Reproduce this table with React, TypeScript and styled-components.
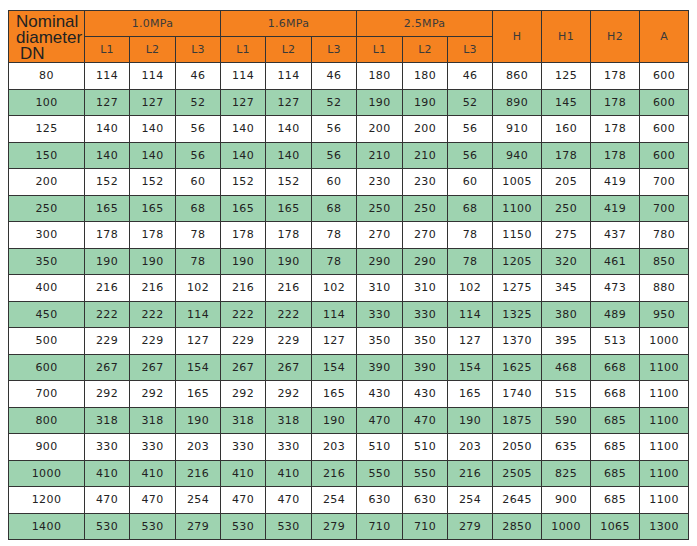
import React from "react";
import styled, { createGlobalStyle } from "styled-components";

const GlobalStyle = createGlobalStyle`
  body {
    margin: 0;
    background: #ffffff;
    font-family: "DejaVu Sans", sans-serif;
  }
`;

const Page = styled.div`
  padding: 10px 0 0 8px;
`;

const Table = styled.table`
  border-collapse: collapse;
  table-layout: fixed;
  width: 681px;
  border: 1px solid #444;
`;

const HeadCell = styled.th`
  background: #f58220;
  color: #3a3a3a;
  font-weight: normal;
  font-size: 11px;
  letter-spacing: 0.3px;
  border: 1px solid #333;
  height: 25px;
  padding: 0;
  text-align: center;
`;

const TitleCell = styled(HeadCell)`
  font-family: "Liberation Sans", Arial, sans-serif;
  font-size: 17px;
  color: #222;
  letter-spacing: 0;
  line-height: 16px;
  text-align: left;
  padding: 3px 0 0 7px;
  vertical-align: top;
`;

const Indent = styled.span`
  padding-left: 4px;
`;

const Row = styled.tr<{ $shaded: boolean }>`
  background: ${(p) => (p.$shaded ? "#9ed3b0" : "#ffffff")};
`;

const Cell = styled.td`
  border: 1px solid #333;
  height: 25.5px;
  padding: 0;
  text-align: center;
  font-size: 11px;
  letter-spacing: 0.4px;
  color: #222;
`;

const rows: number[][] = [
  [80, 114, 114, 46, 114, 114, 46, 180, 180, 46, 860, 125, 178, 600],
  [100, 127, 127, 52, 127, 127, 52, 190, 190, 52, 890, 145, 178, 600],
  [125, 140, 140, 56, 140, 140, 56, 200, 200, 56, 910, 160, 178, 600],
  [150, 140, 140, 56, 140, 140, 56, 210, 210, 56, 940, 178, 178, 600],
  [200, 152, 152, 60, 152, 152, 60, 230, 230, 60, 1005, 205, 419, 700],
  [250, 165, 165, 68, 165, 165, 68, 250, 250, 68, 1100, 250, 419, 700],
  [300, 178, 178, 78, 178, 178, 78, 270, 270, 78, 1150, 275, 437, 780],
  [350, 190, 190, 78, 190, 190, 78, 290, 290, 78, 1205, 320, 461, 850],
  [400, 216, 216, 102, 216, 216, 102, 310, 310, 102, 1275, 345, 473, 880],
  [450, 222, 222, 114, 222, 222, 114, 330, 330, 114, 1325, 380, 489, 950],
  [500, 229, 229, 127, 229, 229, 127, 350, 350, 127, 1370, 395, 513, 1000],
  [600, 267, 267, 154, 267, 267, 154, 390, 390, 154, 1625, 468, 668, 1100],
  [700, 292, 292, 165, 292, 292, 165, 430, 430, 165, 1740, 515, 668, 1100],
  [800, 318, 318, 190, 318, 318, 190, 470, 470, 190, 1875, 590, 685, 1100],
  [900, 330, 330, 203, 330, 330, 203, 510, 510, 203, 2050, 635, 685, 1100],
  [1000, 410, 410, 216, 410, 410, 216, 550, 550, 216, 2505, 825, 685, 1100],
  [1200, 470, 470, 254, 470, 470, 254, 630, 630, 254, 2645, 900, 685, 1100],
  [1400, 530, 530, 279, 530, 530, 279, 710, 710, 279, 2850, 1000, 1065, 1300],
];

const widths = [76, 45, 46, 45, 45, 46, 45, 46, 45, 45, 49, 49, 49, 49];
const pressures = ["1.0MPa", "1.6MPa", "2.5MPa"];

export default function App() {
  return (
    <Page>
      <GlobalStyle />
      <Table>
        <colgroup>
          {widths.map((w, i) => (
            <col key={i} style={{ width: w }} />
          ))}
        </colgroup>
        <thead>
          <tr>
            <TitleCell rowSpan={2}>
              Nominal
              <br />
              diameter
              <br />
              <Indent>DN</Indent>
            </TitleCell>
            {pressures.map((p) => (
              <HeadCell key={p} colSpan={3}>
                {p}
              </HeadCell>
            ))}
            <HeadCell rowSpan={2}>H</HeadCell>
            <HeadCell rowSpan={2}>H1</HeadCell>
            <HeadCell rowSpan={2}>H2</HeadCell>
            <HeadCell rowSpan={2}>A</HeadCell>
          </tr>
          <tr>
            {pressures.map((p) =>
              ["L1", "L2", "L3"].map((l) => <HeadCell key={p + l}>{l}</HeadCell>)
            )}
          </tr>
        </thead>
        <tbody>
          {rows.map((r, i) => (
            <Row key={r[0]} $shaded={i % 2 === 1}>
              {r.map((v, j) => (
                <Cell key={j}>{v}</Cell>
              ))}
            </Row>
          ))}
        </tbody>
      </Table>
    </Page>
  );
}
